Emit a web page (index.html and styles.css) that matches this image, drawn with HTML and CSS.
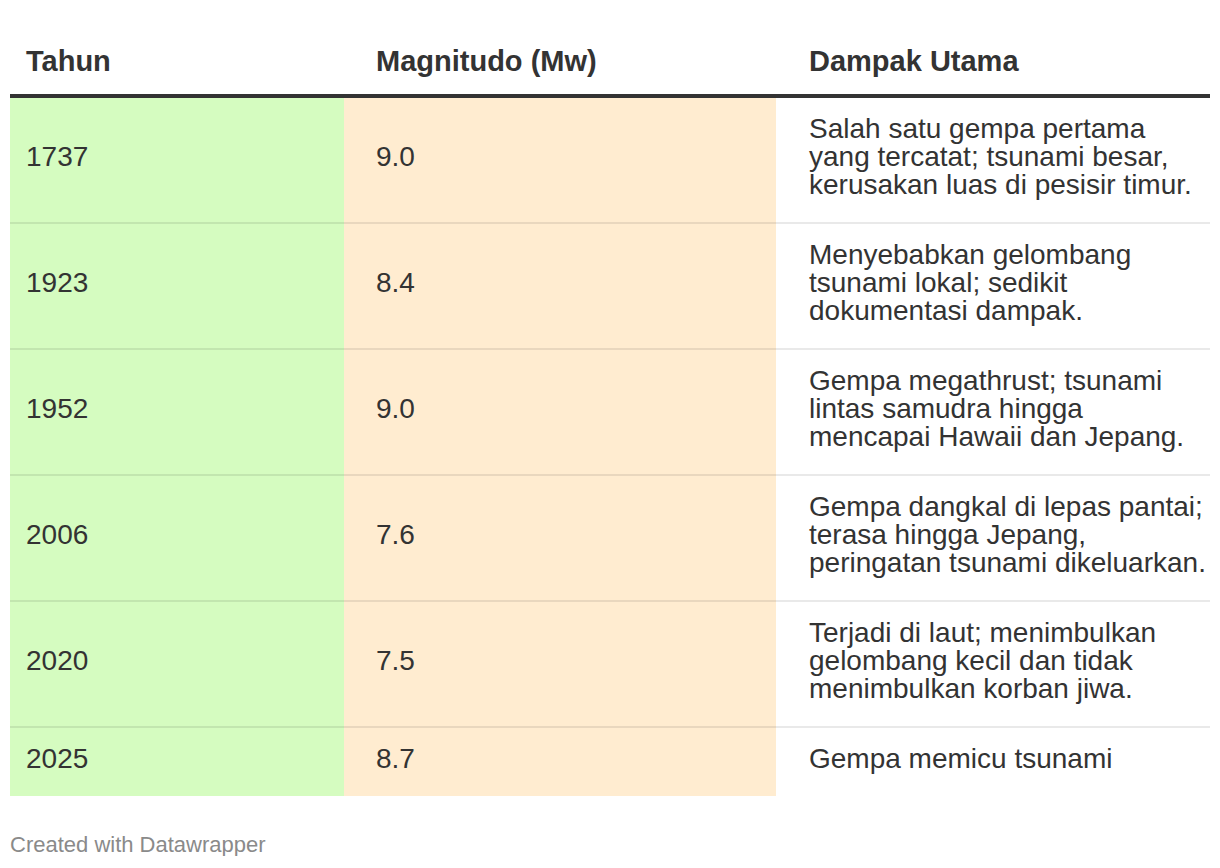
FILE: index.html
```html
<!DOCTYPE html>
<html lang="id">
<head>
<meta charset="utf-8">
<title>Gempa</title>
<link rel="stylesheet" href="styles.css">
</head>
<body>
<div class="wrap">
  <table class="dw-table">
    <colgroup>
      <col class="c1">
      <col class="c2">
      <col class="c3">
    </colgroup>
    <thead>
      <tr>
        <th class="col-year">Tahun</th>
        <th class="col-mag">Magnitudo (Mw)</th>
        <th class="col-impact">Dampak Utama</th>
      </tr>
    </thead>
    <tbody>
      <tr>
        <td class="col-year">1737</td>
        <td class="col-mag">9.0</td>
        <td class="col-impact">Salah satu gempa pertama yang tercatat; tsunami besar, kerusakan luas di pesisir timur.</td>
      </tr>
      <tr>
        <td class="col-year">1923</td>
        <td class="col-mag">8.4</td>
        <td class="col-impact">Menyebabkan gelombang tsunami lokal; sedikit dokumentasi dampak.</td>
      </tr>
      <tr>
        <td class="col-year">1952</td>
        <td class="col-mag">9.0</td>
        <td class="col-impact">Gempa megathrust; tsunami lintas samudra hingga mencapai Hawaii dan Jepang.</td>
      </tr>
      <tr>
        <td class="col-year">2006</td>
        <td class="col-mag">7.6</td>
        <td class="col-impact">Gempa dangkal di lepas pantai; terasa hingga Jepang, peringatan tsunami dikeluarkan.</td>
      </tr>
      <tr>
        <td class="col-year">2020</td>
        <td class="col-mag">7.5</td>
        <td class="col-impact">Terjadi di laut; menimbulkan gelombang kecil dan tidak menimbulkan korban jiwa.</td>
      </tr>
      <tr class="last">
        <td class="col-year">2025</td>
        <td class="col-mag">8.7</td>
        <td class="col-impact">Gempa memicu tsunami</td>
      </tr>
    </tbody>
  </table>
  <div class="footer">Created with Datawrapper</div>
</div>
</body>
</html>
```
FILE: styles.css
```css
html, body {
  margin: 0;
  padding: 0;
  background: #ffffff;
}

body {
  font-family: "Liberation Sans", Arial, Helvetica, sans-serif;
  color: #333333;
}

.wrap {
  padding: 0 10px;
}

.dw-table {
  width: 1200px;
  table-layout: fixed;
  border-collapse: collapse;
  border-spacing: 0;
}

.c1 { width: 334px; }
.c2 { width: 432px; }
.c3 { width: 434px; }

.dw-table th {
  font-size: 29px;
  line-height: 28px;
  font-weight: 700;
  text-align: left;
  vertical-align: bottom;
  padding-top: 47px;
  padding-bottom: 19px;
  border-bottom: 4px solid #333333;
  color: #333333;
}

.dw-table td {
  font-size: 28px;
  line-height: 28px;
  vertical-align: middle;
  padding-top: 17px;
  padding-bottom: 23px;
  border-bottom: 2px solid rgba(0, 0, 0, 0.085);
  color: #333333;
}

.dw-table tr.last td {
  border-bottom: none;
}

.col-year {
  padding-left: 16px;
  padding-right: 4px;
}

.col-mag {
  padding-left: 32px;
  padding-right: 4px;
}

.col-impact {
  padding-left: 33px;
  padding-right: 2px;
}

.dw-table td.col-year {
  background: #d5fcc0;
}

.dw-table td.col-mag {
  background: #ffecd0;
}

.footer {
  margin-top: 38px;
  font-size: 22px;
  line-height: 22px;
  color: #8a8a8a;
}
```
